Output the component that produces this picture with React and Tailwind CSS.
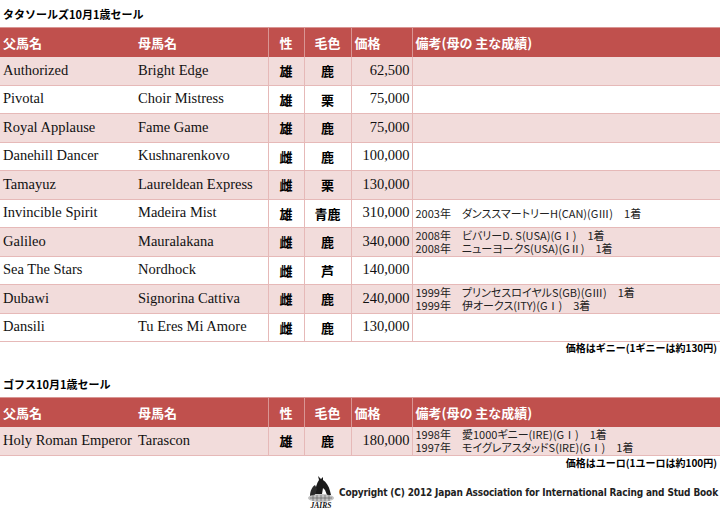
const tattersalls = [
  { sire: "Authorized", dam: "Bright Edge", sex: "雄", color: "鹿", price: "62,500", notes: [] },
  { sire: "Pivotal", dam: "Choir Mistress", sex: "雄", color: "栗", price: "75,000", notes: [] },
  { sire: "Royal Applause", dam: "Fame Game", sex: "雄", color: "鹿", price: "75,000", notes: [] },
  { sire: "Danehill Dancer", dam: "Kushnarenkovo", sex: "雌", color: "鹿", price: "100,000", notes: [] },
  { sire: "Tamayuz", dam: "Laureldean Express", sex: "雌", color: "栗", price: "130,000", notes: [] },
  { sire: "Invincible Spirit", dam: "Madeira Mist", sex: "雄", color: "青鹿", price: "310,000", notes: ["2003年\u3000ダンススマートリーH(CAN)(GⅢ)\u30001着"] },
  { sire: "Galileo", dam: "Mauralakana", sex: "雌", color: "鹿", price: "340,000", notes: ["2008年\u3000ビバリーD. S(USA)(GⅠ)\u30001着", "2008年\u3000ニューヨークS(USA)(GⅡ)\u30001着"] },
  { sire: "Sea The Stars", dam: "Nordhock", sex: "雌", color: "芦", price: "140,000", notes: [] },
  { sire: "Dubawi", dam: "Signorina Cattiva", sex: "雌", color: "鹿", price: "240,000", notes: ["1999年\u3000プリンセスロイヤルS(GB)(GⅢ)\u30001着", "1999年\u3000伊オークス(ITY)(GⅠ)\u30003着"] },
  { sire: "Dansili", dam: "Tu Eres Mi Amore", sex: "雌", color: "鹿", price: "130,000", notes: [] },
]

const goffs = [
  { sire: "Holy Roman Emperor", dam: "Tarascon", sex: "雄", color: "鹿", price: "180,000", notes: ["1998年\u3000愛1000ギニー(IRE)(GⅠ)\u30001着", "1997年\u3000モイグレアスタッドS(IRE)(GⅠ)\u30001着"] },
]

const serif = "font-['Liberation_Serif','Noto_Serif_CJK_JP',serif]"
const gothic = "font-['Noto_Sans_CJK_JP',sans-serif]"

function SaleTable({ rows }) {
  return (
    <table className="w-[720px] table-fixed border-collapse">
      <colgroup>
        <col className="w-[135px]" />
        <col className="w-[133px]" />
        <col className="w-[36px]" />
        <col className="w-[47px]" />
        <col className="w-[61px]" />
        <col />
      </colgroup>
      <thead>
        <tr className="h-[29px] bg-[#c0504d] text-[13px] font-bold text-white border-t border-[#d99694]">
          <th className="pl-[3px] text-left font-bold">父馬名</th>
          <th className="pl-[3px] text-left font-bold border-r border-[#d99694]">母馬名</th>
          <th className="text-center font-bold border-r border-[#d99694]">性</th>
          <th className="text-center font-bold border-r border-[#d99694]">毛色</th>
          <th className="pl-[3px] text-left font-bold border-r border-[#d99694]">価格</th>
          <th className="pl-[3px] text-left font-bold">備考(母の 主な成績)</th>
        </tr>
      </thead>
      <tbody>
        {rows.map((r, i) => (
          <tr key={r.sire} className={`h-[28.5px] border-b border-[#e6b9b8] ${i % 2 === 0 ? "bg-[#f2dcdb]" : "bg-white"}`}>
            <td className={`pl-[3px] text-[14.5px] text-[#111] whitespace-nowrap ${serif}`}>{r.sire}</td>
            <td className={`pl-[3px] text-[14.5px] text-[#111] whitespace-nowrap border-r border-[#e6b9b8] ${serif}`}>{r.dam}</td>
            <td className="text-center text-[13px] font-bold text-black border-r border-[#e6b9b8]">{r.sex}</td>
            <td className="text-center text-[13px] font-bold text-black border-r border-[#e6b9b8]">{r.color}</td>
            <td className={`pr-[2px] text-right text-[14.5px] text-[#111] border-r border-[#e6b9b8] ${serif}`}>{r.price}</td>
            <td className="pl-[3px] text-[11px] text-[#222] whitespace-nowrap [font-feature-settings:'palt']">
              {r.notes.map((n) => (
                <div key={n} className="leading-[12.5px]">{n}</div>
              ))}
            </td>
          </tr>
        ))}
      </tbody>
    </table>
  )
}

function Logo() {
  return (
    <svg width="28" height="35" viewBox="0 0 28 35" className="shrink-0">
      <path d="M8 19 C8 13 10 8 12 5 L11 1 L14 4 L16 2 L16 5 C19 7 22 11 23 16 L24 20 L20 20 L18 15 L16 13 L15 19 Z" fill="#1a1a1a" />
      <path d="M3 21 C3 16 5 12 8 10 L10 14 L8 20 Z" fill="#2a2a2a" />
      <ellipse cx="14" cy="23" rx="13" ry="4" fill="#a8a8a8" opacity="0.7" />
      <path d="M3 23 h22 M6 20 v6 M10 20 v6 M14 20 v6 M18 20 v6 M22 20 v6" stroke="#555" strokeWidth="0.6" />
      <text x="14" y="33" textAnchor="middle" fontFamily="Liberation Serif, serif" fontStyle="italic" fontWeight="bold" fontSize="7.5" fill="#111">JAIRS</text>
    </svg>
  )
}

export default function App() {
  return (
    <div className={`w-[720px] h-[514px] overflow-hidden bg-white text-black ${gothic}`}>
      <div className="pt-[6px] pl-[3px] text-[11px] font-bold leading-[16px]">タタソールズ10月1歳セール</div>
      <div className="mt-[5px]">
        <SaleTable rows={tattersalls} />
      </div>
      <div className="pr-[3px] text-right text-[10px] font-bold leading-[12px]">価格はギニー(1ギニーは約130円)</div>
      <div className="mt-[22px] pl-[3px] text-[11px] font-bold leading-[16px]">ゴフス10月1歳セール</div>
      <div className="mt-[5px]">
        <SaleTable rows={goffs} />
      </div>
      <div className="pr-[3px] text-right text-[10px] font-bold leading-[13px]">価格はユーロ(1ユーロは約100円)</div>
      <div className="mt-[6px] flex items-center justify-end gap-[4px] pr-[2px]">
        <Logo />
        <span className="font-['DejaVu_Sans_Condensed',sans-serif] text-[10px] font-bold tracking-[-0.15px] text-[#222]">
          Copyright (C) 2012 Japan Association for International Racing and Stud Book
        </span>
      </div>
    </div>
  )
}
